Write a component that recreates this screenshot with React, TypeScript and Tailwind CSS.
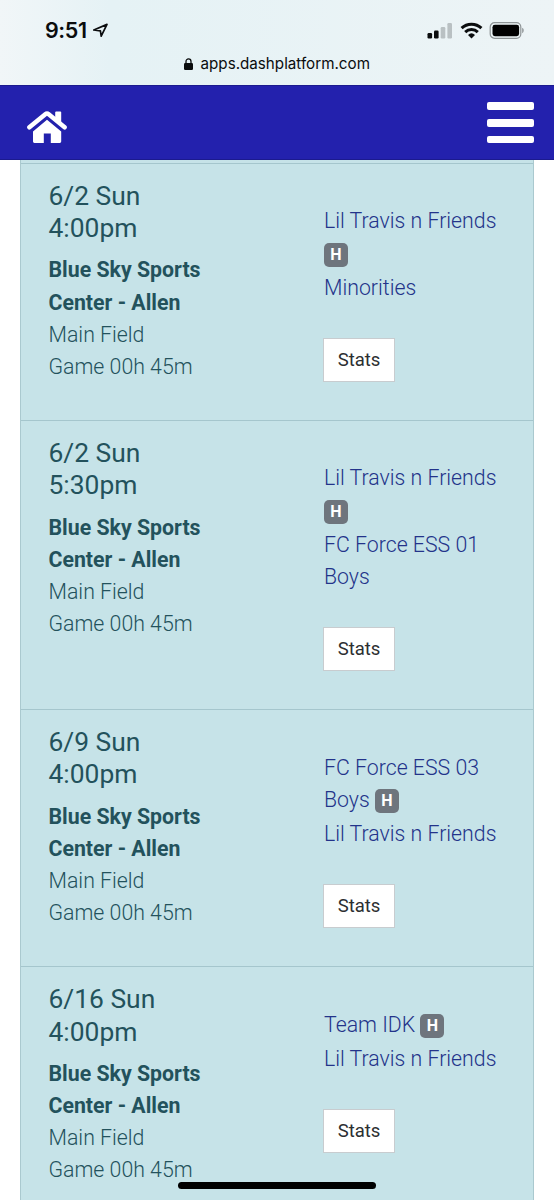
type Team = { name: string; home?: boolean };

type Game = {
  date: string;
  time: string;
  teams: Team[];
};

const GAMES: Game[] = [
  { date: "6/2 Sun", time: "4:00pm", teams: [{ name: "Lil Travis n Friends", home: true }, { name: "Minorities" }] },
  { date: "6/2 Sun", time: "5:30pm", teams: [{ name: "Lil Travis n Friends", home: true }, { name: "FC Force ESS 01 Boys" }] },
  { date: "6/9 Sun", time: "4:00pm", teams: [{ name: "FC Force ESS 03 Boys", home: true }, { name: "Lil Travis n Friends" }] },
  { date: "6/16 Sun", time: "4:00pm", teams: [{ name: "Team IDK", home: true }, { name: "Lil Travis n Friends" }] },
];

function StatusBar() {
  return (
    <div className="h-[85px] shrink-0 bg-linear-to-r from-[#f1f6f8] via-[#e5f2f5] via-20% to-[#edf4f6] font-['Inter',sans-serif] text-[#0b0d0e]">
      <div className="flex h-[53px] items-start justify-between pt-[18px] pr-[29px] pl-[45px]">
        <div className="flex items-center">
          <span className="w-[44px] text-[21.5px] leading-[25px] font-semibold tracking-[-0.4px] whitespace-nowrap">9:51</span>
          <svg className="ml-[3px] h-[16px] w-[17px]" viewBox="0 0 17 16" fill="none" stroke="currentColor" strokeWidth="1.7" strokeLinejoin="round">
            <path d="M15 1.4 9.2 13.2 8.4 7.8 1.8 7Z" />
          </svg>
        </div>
        <div className="flex h-[25px] items-center">
          {/* Signal */}
          <svg className="h-[17px] w-[25px]" viewBox="0 0 25 17" fill="currentColor">
            <rect x=".5" y="11" width="4.6" height="5.5" rx="1.2" />
            <rect x="7" y="8.5" width="4.6" height="8" rx="1.2" />
            <rect x="13.7" y="5" width="4.6" height="11.5" rx="1.2" opacity=".22" />
            <rect x="20.4" y="1" width="4.6" height="15.5" rx="1.2" opacity=".22" />
          </svg>
          {/* Wifi */}
          <svg className="ml-[8px] h-[17px] w-[23px]" viewBox="0 0 23 17" fill="none" stroke="currentColor" strokeWidth="3">
            <path d="M1.6 6.2a14.2 14.2 0 0 1 19.8 0" />
            <path d="M5.2 10.1a9 9 0 0 1 12.6 0" />
            <path d="M8 12.9a5.2 5.2 0 0 1 7 0l-3.5 3.6Z" fill="currentColor" stroke="none" />
          </svg>
          {/* Battery */}
          <svg className="ml-[6px] h-[17px] w-[36px]" viewBox="0 0 36 17">
            <rect x="1.2" y=".7" width="30.6" height="15.6" rx="4.4" fill="none" stroke="#8e9496" strokeWidth="1.2" />
            <rect x="3.5" y="2.8" width="26.6" height="11.4" rx="2.4" fill="#000" />
            <path d="M33.2 5.8c2 .7 2 4.7 0 5.4Z" fill="#8e9496" />
          </svg>
        </div>
      </div>
      <div className="flex h-[21px] items-center pl-[184px]">
        <svg className="h-[12px] w-[9px]" viewBox="0 0 9 12">
          <rect x="0" y="5" width="9" height="7" rx="1.2" fill="currentColor" />
          <path d="M2 5.5V3.4a2.5 2.5 0 0 1 5 0v2.1" fill="none" stroke="currentColor" strokeWidth="1.3" />
        </svg>
        <span className="mt-px ml-[7.5px] text-[15.2px] whitespace-nowrap">apps.dashplatform.com</span>
      </div>
    </div>
  );
}

function NavBar() {
  return (
    <div className="flex h-[75px] shrink-0 items-start justify-between border-y border-[#1b1a8e] bg-[#2321ad] pr-[20px] pl-[27px]">
      <svg className="mt-[25px] h-[33px] w-[40px]" viewBox="0 0 40 33" fill="#fff">
        <path d="M2.4 16.3 18.3 3.2a2.7 2.7 0 0 1 3.4 0L37.6 16.3" fill="none" stroke="#fff" strokeWidth="4.5" strokeLinecap="round" strokeLinejoin="round" />
        <path d="M28.2 1.5q0-.9.9-.9h4.2q.9 0 .9.9v12l-6-5Z" />
        <path d="M20 8.7 34.2 20.4v10.2q0 1.4-1.4 1.4h-9V22.5h-7V32H7.4q-1.4 0-1.4-1.4V20.4Z" />
      </svg>
      <div className="mt-[16px] flex w-[47px] flex-col gap-[9px]">
        <div className="h-[7.8px] rounded-[2px] bg-white" />
        <div className="h-[7.8px] rounded-[2px] bg-white" />
        <div className="h-[7.8px] rounded-[2px] bg-white" />
      </div>
    </div>
  );
}

function HomeBadge() {
  return (
    <span className="mb-[5.1px] inline-block h-6 w-6 overflow-hidden rounded-[5px] bg-[#6e757d] text-center align-[-11.6px] text-[16px] leading-6 font-bold text-white">
      H
    </span>
  );
}

function GameRow({ game }: { game: Game }) {
  return (
    <div className="flex shrink-0 border-t border-[#a5c6cd] pl-[27.5px] text-[#23525c]">
      <div className="w-[190px] pt-[16.3px]">
        <div className="mb-[10.2px] text-[26.4px] leading-[32.15px]">
          <div>{game.date}</div>
          <div>{game.time}</div>
        </div>
        <div className="font-bold">Blue Sky Sports Center - Allen</div>
        <div className="font-light">Main Field</div>
        <div className="font-light">Game 00h 45m</div>
      </div>
      <div className="ml-[84.5px] w-[185px] pt-[41.5px] pb-[37.7px]">
        <div className="pl-px font-light text-[#23338a]">
          {game.teams.map((team) => (
            <div key={team.name}>
              {team.name} {team.home && <HomeBadge />}
            </div>
          ))}
        </div>
        <button className="mt-[34px] block h-11 w-[72px] border border-[#c8cccf] bg-white text-[18.5px] text-[#2c2f31]">
          Stats
        </button>
      </div>
    </div>
  );
}

export default function App() {
  return (
    <div className="relative flex h-[1200px] w-[554px] flex-col overflow-hidden bg-white font-['Roboto',sans-serif]">
      <StatusBar />
      <NavBar />
      <div className="mx-[20px] flex min-h-0 flex-1 flex-col overflow-hidden border-x border-[#aac9cf] bg-[#c6e3e8] pt-[2.7px] text-[21.3px] leading-[32.15px]">
        {GAMES.map((game) => (
          <GameRow key={`${game.date} ${game.time}`} game={game} />
        ))}
      </div>
      {/* Home indicator */}
      <div className="absolute bottom-[11px] left-[178px] h-[7px] w-[198px] rounded-full bg-black" />
    </div>
  );
}
